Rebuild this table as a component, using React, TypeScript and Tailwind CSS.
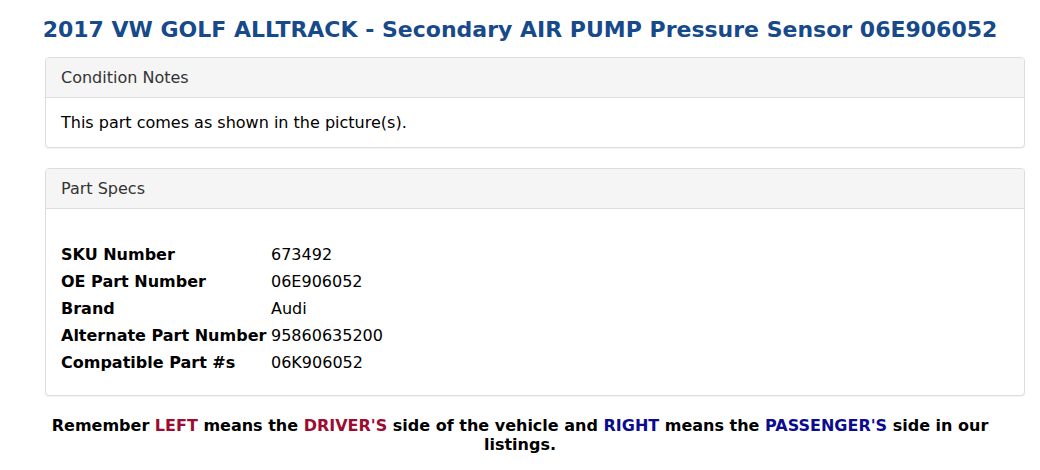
const specs: [string, string][] = [
  ["SKU Number", "673492"],
  ["OE Part Number", "06E906052"],
  ["Brand", "Audi"],
  ["Alternate Part Number", "95860635200"],
  ["Compatible Part #s", "06K906052"],
];

const Panel = ({ title, children, bodyClass }: { title: string; children: React.ReactNode; bodyClass: string }) => (
  <div className="border border-[#dddddd] rounded-[4px] bg-white shadow-[0_1px_1px_rgba(0,0,0,0.05)]">
    <div className="bg-[#f5f5f5] border-b border-[#dddddd] rounded-t-[3px] px-[15px] h-[40px] flex items-center text-[16px] text-[#333333] pt-[1px]">
      {title}
    </div>
    <div className={bodyClass}>{children}</div>
  </div>
);

export default function App() {
  return (
    <div className="w-[1040px] h-[470px] bg-white font-['DejaVu_Sans',sans-serif] text-black overflow-hidden">
      <h1 className="text-center text-[22px] font-bold text-[#174a8b] pt-[15px] leading-[30px]">
        2017 VW GOLF ALLTRACK - Secondary AIR PUMP Pressure Sensor 06E906052
      </h1>
      <div className="ml-[45px] mr-[15px] mt-[12px] flex flex-col gap-[20px]">
        <Panel title="Condition Notes" bodyClass="px-[15px] h-[49px] flex items-center text-[16px]">
          This part comes as shown in the picture(s).
        </Panel>
        <Panel title="Part Specs" bodyClass="px-[15px] pt-[32px] pb-[19px] text-[16px]">
          <div className="flex flex-col">
            {specs.map(([k, v]) => (
              <div key={k} className="flex h-[27px] items-center">
                <div className="w-[210px] font-bold">{k}</div>
                <div>{v}</div>
              </div>
            ))}
          </div>
        </Panel>
      </div>
      <p className="text-center font-bold text-[16px] leading-[19px] mt-[20px] px-[45px]">
        Remember <span className="text-[#9c0c30]">LEFT</span> means the{" "}
        <span className="text-[#9c0c30]">DRIVER'S</span> side of the vehicle and{" "}
        <span className="text-[#0b0b8f]">RIGHT</span> means the{" "}
        <span className="text-[#0b0b8f]">PASSENGER'S</span> side in our listings.
      </p>
    </div>
  );
}
